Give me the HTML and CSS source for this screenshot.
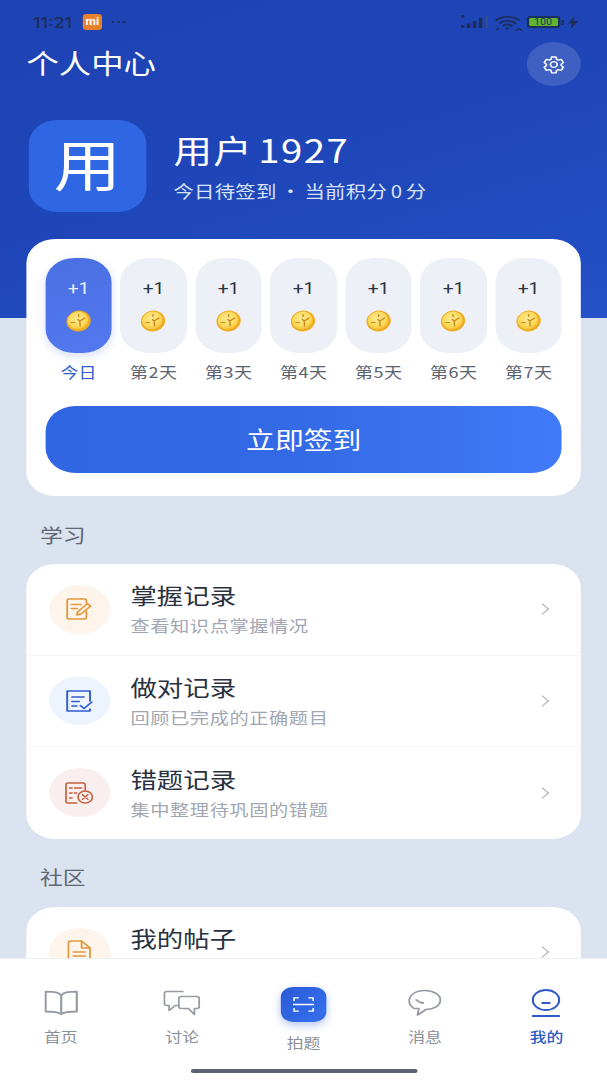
FILE: index.html
```html
<!DOCTYPE html>
<html lang="zh-CN">
<head>
<meta charset="utf-8">
<title>个人中心</title>
<link rel="stylesheet" href="styles.css">
</head>
<body>
<svg class="defs" width="0" height="0">
  <defs>
    <radialGradient id="gold" cx="42%" cy="42%" r="62%">
      <stop offset="0" stop-color="#fde992"/>
      <stop offset="0.7" stop-color="#fbd95c"/>
      <stop offset="1" stop-color="#f4bf30"/>
    </radialGradient>
    <symbol id="coin" viewBox="0 0 21 22">
      <ellipse cx="10.500" cy="11" rx="10" ry="10.600" fill="#efab22" transform="rotate(25 10.500 11)"/>
      <ellipse cx="10" cy="10.500" rx="8.400" ry="9" fill="url(#gold)" transform="rotate(25 10 10.500)"/>
      <path d="M10.500 4.500v2M15.500 8l-4 3 .3 5M4.500 12.500h3M10 9.500l1.500 1.500" fill="none" stroke="#c98a1e" stroke-width="1.200" stroke-linecap="round"/>
    </symbol>
  </defs>
</svg>
<div class="stage">
  <header class="hero">
    <div class="status">
      <div class="status-left">
        <span class="clock">11:21</span>
        <span class="mi"><span class="mi-text">mi</span></span>
        <span class="dots"><i></i><i></i><i></i></span>
      </div>
      <div class="status-right">
        <svg class="sig" width="24" height="16" viewBox="0 0 24 16"><g fill="#1d2c58"><rect x="0" y="1" width="3" height="3" rx="1"/><rect x="0" y="11" width="3" height="3"/><rect x="5" y="9.500" width="3" height="4.500"/><rect x="10" y="7" width="3" height="7"/><rect x="15" y="4" width="3" height="10"/></g><rect x="21" y="2" width="1.400" height="12" fill="#3a4f90"/></svg>
        <svg class="wifi" width="24" height="17" viewBox="0 0 24 17"><g fill="none" stroke="#1d2c58" stroke-width="1.700"><path d="M1 6.500C6.500 1.500 15.500 1.500 21 6.500"/><path d="M4 9.500C8 6 14 6 18 9.500"/><path d="M7 12c2.500-2 5.500-2 8 0"/></g><path d="M9 13.500h4l-2 2.500z" fill="#1d2c58"/><path d="M1.500 15.500h1.500v-2M19 15.500a2 2 0 1 0 3 0 2 2 0 0 0-3 0z" fill="none" stroke="#1d2c58" stroke-width="1.200"/></svg>
        <span class="batt"><span class="batt-fill">100</span></span>
        <span class="batt-tip"></span>
        <svg class="bolt" width="9" height="13" viewBox="0 0 9 13"><path d="M6 0L0 7.500h3.500L2.500 13 9 5H5z" fill="#1d2c58"/></svg>
      </div>
    </div>
    <div class="title-row">
      <h1 class="title">个人中心</h1>
      <button class="gear-btn" aria-label="设置">
        <svg width="19" height="19" viewBox="0 0 24 24" fill="none" stroke="#fff" stroke-width="1.700" stroke-linejoin="round"><path d="M9.700 2.500h4.600l.7 3 1.800 1 3-.9 2.300 4-2.300 2.100v1.600l2.300 2.100-2.300 4-3-.9-1.800 1-.7 3H9.700l-.7-3-1.800-1-3 .9-2.300-4 2.300-2.100v-1.600L1.900 9.600l2.300-4 3 .9 1.800-1z"/><circle cx="12" cy="12" r="3.600"/></svg>
      </button>
    </div>
    <div class="profile">
      <div class="avatar">用</div>
      <div class="who">
        <div class="name">用户 1927</div>
        <div class="sub">今日待签到 · 当前积分 0 分</div>
      </div>
    </div>
  </header>

  <section class="card sign">
    <div class="days">
      <div class="day today"><div class="pill"><span class="plus">+1</span><svg class="coin"><use href="#coin"/></svg></div><span class="day-label">今日</span></div>
      <div class="day"><div class="pill"><span class="plus">+1</span><svg class="coin"><use href="#coin"/></svg></div><span class="day-label">第 2 天</span></div>
      <div class="day"><div class="pill"><span class="plus">+1</span><svg class="coin"><use href="#coin"/></svg></div><span class="day-label">第 3 天</span></div>
      <div class="day"><div class="pill"><span class="plus">+1</span><svg class="coin"><use href="#coin"/></svg></div><span class="day-label">第 4 天</span></div>
      <div class="day"><div class="pill"><span class="plus">+1</span><svg class="coin"><use href="#coin"/></svg></div><span class="day-label">第 5 天</span></div>
      <div class="day"><div class="pill"><span class="plus">+1</span><svg class="coin"><use href="#coin"/></svg></div><span class="day-label">第 6 天</span></div>
      <div class="day"><div class="pill"><span class="plus">+1</span><svg class="coin"><use href="#coin"/></svg></div><span class="day-label">第 7 天</span></div>
    </div>
    <button class="sign-btn">立即签到</button>
  </section>

  <h2 class="section">学习</h2>
  <section class="card list">
    <div class="row">
      <span class="badge orange">
        <svg width="23" height="22" viewBox="0 0 23 22" fill="none" stroke="#e3983a" stroke-width="1.500" stroke-linecap="round" stroke-linejoin="round"><path d="M17 5V2.500a1.500 1.500 0 0 0-1.500-1.500H2.500A1.500 1.500 0 0 0 1 2.500v17A1.500 1.500 0 0 0 2.500 21h13a1.500 1.500 0 0 0 1.500-1.500V13"/><path d="M4.500 6.500h8M4.500 10.500h5"/><path d="M9 17l1-3.500 8-8 2.500 2.500-8 8z"/></svg>
      </span>
      <div class="text"><div class="row-title">掌握记录</div><div class="row-sub">查看知识点掌握情况</div></div>
      <span class="chev"></span>
    </div>
    <div class="row">
      <span class="badge blue">
        <svg width="23" height="22" viewBox="0 0 23 22" fill="none" stroke="#2f5ccf" stroke-width="1.600" stroke-linecap="round" stroke-linejoin="round"><path d="M20 11V1H1v20h19v-2"/><path d="M5 7h10M5 11.500h6M5 16h4"/><path d="M12 15.500l3 3 6.500-6.500"/></svg>
      </span>
      <div class="text"><div class="row-title">做对记录</div><div class="row-sub">回顾已完成的正确题目</div></div>
      <span class="chev"></span>
    </div>
    <div class="row">
      <span class="badge red">
        <svg width="24" height="22" viewBox="0 0 24 22" fill="none" stroke="#c9603f" stroke-width="1.400" stroke-linecap="round" stroke-linejoin="round"><path d="M17 8V2.500A1.500 1.500 0 0 0 15.500 1H2.500A1.500 1.500 0 0 0 1 2.500v17A1.500 1.500 0 0 0 2.500 21H10"/><path d="M4 6h2M8 6h6M4 11h2M8 11h2M4 16h2"/><circle cx="17" cy="15" r="6"/><path d="M14.800 12.800l4.400 4.400M19.200 12.800l-4.400 4.400"/></svg>
      </span>
      <div class="text"><div class="row-title">错题记录</div><div class="row-sub">集中整理待巩固的错题</div></div>
      <span class="chev"></span>
    </div>
  </section>

  <h2 class="section section-2">社区</h2>
  <section class="card list">
    <div class="row">
      <span class="badge orange">
        <svg width="20" height="24" viewBox="0 0 20 24" fill="none" stroke="#e3983a" stroke-width="1.500" stroke-linecap="round" stroke-linejoin="round"><path d="M12 1H3a2 2 0 0 0-2 2v18a2 2 0 0 0 2 2h14a2 2 0 0 0 2-2V8z"/><path d="M12 1v7h7"/><path d="M5 12h10M5 16h10"/></svg>
      </span>
      <div class="text"><div class="row-title">我的帖子</div><div class="row-sub">查看我发布的内容</div></div>
      <span class="chev"></span>
    </div>
  </section>

  <nav class="tabbar">
    <div class="tab">
      <svg class="tab-ico" width="28" height="25" viewBox="0 0 28 25" fill="none" stroke="#969ba3" stroke-width="1.800" stroke-linejoin="round"><path d="M14 5C12 2 9 1.200 1 1.200V21c6 0 10 .3 13 2.500 3-2.200 7-2.500 13-2.500V1.200C19 1.200 16 2 14 5z"/><path d="M14 5v18.500"/></svg>
      <span class="tab-label">首页</span>
    </div>
    <div class="tab">
      <svg class="tab-ico" width="31" height="25" viewBox="0 0 31 25" fill="none" stroke="#969ba3" stroke-width="1.500" stroke-linejoin="round"><path d="M17 1H3a2 2 0 0 0-2 2v10a2 2 0 0 0 2 2h2v5l5-5h3"/><path d="M15 6h13a2 2 0 0 1 2 2v8a2 2 0 0 1-2 2h-2v6l-5-6h-6a2 2 0 0 1-2-2V8a2 2 0 0 1 2-2z"/></svg>
      <span class="tab-label">讨论</span>
    </div>
    <div class="tab tab-mid">
      <span class="scan">
        <svg width="18" height="15" viewBox="0 0 20 17" fill="none" stroke="#fff" stroke-width="1.500"><path d="M1 4.500V1h4.500M14.500 1H19v3.500M1 12.500V16h4.500M14.500 16H19v-3.500M0 8.500h20"/></svg>
      </span>
      <span class="tab-label">拍题</span>
    </div>
    <div class="tab">
      <svg class="tab-ico" width="28" height="27" viewBox="0 0 28 27" fill="none" stroke="#969ba3" stroke-width="1.800" stroke-linejoin="round" stroke-linecap="round"><path d="M14 1C6.500 1 1 5.500 1 11.500c0 3 1.500 5.500 4 7.500l4 0-1 6.500 7-5.500c7 0 12-4.500 12-9.500C27 5.500 21.500 1 14 1z" stroke-width="1.600"/><path d="M7 10.500c1.500 1.600 3.500 2.600 5.500 3"/></svg>
      <span class="tab-label">消息</span>
    </div>
    <div class="tab active">
      <svg class="tab-ico" width="24" height="28" viewBox="0 0 24 28" fill="none" stroke="#2f5cc9" stroke-width="1.800" stroke-linecap="round"><ellipse cx="12" cy="11" rx="11" ry="10"/><path d="M9 14h6M1 27h22"/></svg>
      <span class="tab-label">我的</span>
    </div>
    <span class="home-bar"></span>
  </nav>
</div>
</body>
</html>
```
FILE: styles.css
```css
* { box-sizing: border-box; }
html, body { margin: 0; padding: 0; background: #dce3f0; overflow: hidden; }
body { width: 607px; height: 1080px; font-family: "Noto Sans CJK SC", "Noto Sans", sans-serif; }
.defs { position: absolute; }

/* The reference is stretched horizontally by 1.2, so the page is laid out at 506px wide. */
.stage {
  position: relative;
  width: 506px;
  height: 1080px;
  overflow: hidden;
  background: #dce3f0;
  transform: scaleX(1.2);
  transform-origin: 0 0;
}

.hero {
  height: 318px;
  background: linear-gradient(160deg, #1d42b3 0%, #1f47b9 55%, #2451c6 100%);
  color: #fff;
}
.status { height: 42px; padding: 2px 27px 0 27.500px; display: flex; justify-content: space-between; align-items: center; color: #1d2c58; }
.status-left, .status-right { display: flex; align-items: center; }
.clock { font-family: Inter, Roboto, sans-serif; font-size: 15px; font-weight: 500; color: #1d2c58; }
.mi { width: 16px; height: 16px; margin-left: 9px; border-radius: 3px; background: #e8822c; display: flex; align-items: center; justify-content: center; }
.mi-text { color: #fff; font-family: Roboto, sans-serif; font-size: 10px; font-weight: 700; line-height: 1; }
.dots { margin-left: 8px; display: flex; gap: 2.500px; }
.dots i { width: 2.200px; height: 2.500px; border-radius: 50%; background: #1d2c58; }
.status-right { margin-right: -2.500px; }
.wifi { margin-left: 3.500px; }
.batt { margin-left: 3px; width: 28px; height: 12px; border: 1.500px solid #17305f; border-radius: 3px; padding: 1px; display: flex; background: #17305f; }
.batt-fill { flex: 1; background: #62b52c; border-radius: 1px; color: #17305f; font-family: Roboto, sans-serif; font-size: 9px; line-height: 8px; text-align: center; }
.batt-tip { width: 2px; height: 5px; margin-left: 1px; background: #17305f; }
.bolt { margin-left: 3px; }

.title-row { height: 44px; padding: 0 21.700px 0 22px; display: flex; align-items: center; justify-content: space-between; }
.title { margin: -4px 0 0; font-size: 27px; line-height: 1; font-weight: 400; color: #fff; }
.gear-btn { width: 45px; height: 44px; padding: 0; border: 0; border-radius: 50%; background: rgba(255,255,255,.14); display: flex; align-items: center; justify-content: center; }

.profile { margin: 34px 0 0 24px; display: flex; align-items: center; gap: 23px; }
.avatar { width: 97.500px; height: 92px; border-radius: 24px; background: #2f66e4; color: #fff; font-size: 56px; line-height: 84px; text-align: center; }
.who { margin-top: 0; }
.name { font-size: 32px; line-height: 38px; font-weight: 400; color: #fff; margin-bottom: 11px; word-spacing: -4px; letter-spacing: 1.200px; }
.sub { font-size: 17px; line-height: 24px; color: #d7e2fb; letter-spacing: .2px; word-spacing: -1px; }

.card { margin: 0 22.500px 0 21.700px; background: #fff; border-radius: 24px; }
.sign { margin-top: -79px; height: 257px; padding: 19px 15px 0 16px; position: relative; }
.days { display: flex; gap: 7px; }
.day { width: 55.500px; flex: none; display: flex; flex-direction: column; align-items: center; }
.pill { width: 100%; height: 95px; border-radius: 24px; background: #edf1f7; display: flex; flex-direction: column; align-items: center; padding-top: 20px; }
.plus { font-family: Roboto, Inter, sans-serif; font-size: 16px; line-height: 22px; color: #2b3342; }
.coin { width: 21px; height: 22px; margin-top: 10px; }
.day-label { margin-top: 9px; font-size: 15px; line-height: 20px; color: #5a6270; white-space: nowrap; word-spacing: -3px; }
.today .pill { background: linear-gradient(165deg, #4a6fe2 0%, #5379f0 100%); box-shadow: 0 3px 8px rgba(70,110,230,.22); }
.today .plus { color: #e8eeff; }
.today .day-label { color: #2f5fc8; }
.sign-btn {
  display: block; width: 430.800px; height: 67px; margin-top: 24px; padding: 0 0 2px; border: 0; border-radius: 25px;
  background: linear-gradient(90deg, #3066e2 0%, #3369e4 45%, #3a72ee 75%, #417bfa 100%);
  color: #fff; font-family: inherit; font-size: 24px; font-weight: 400;
}

.section { margin: 24px 0 0 33.300px; height: 30px; font-size: 19px; line-height: 30px; font-weight: 400; color: #5f6673; }
.section-2 { margin-top: 23px; }
.list { margin-top: 14px; }
.section-2 + .list { margin-top: 15px; }
.row { height: 91.500px; display: flex; align-items: center; padding-left: 19px; padding-right: 26px; border-bottom: 1px solid #f2f4f7; position: relative; }
.row:last-child { border-bottom: 0; }
.badge { width: 51px; height: 49px; border-radius: 50%; flex: none; display: flex; align-items: center; justify-content: center; }
.orange { background: #fdf4ec; }
.blue { background: #eef4fe; }
.red { background: #f9efee; }
.text { margin-left: 17px; flex: 1; }
.row-title { font-size: 22px; line-height: 30px; margin-top: -2px; color: #2a3140; font-weight: 400; }
.row-sub { font-size: 16px; line-height: 24px; margin-top: 4px; letter-spacing: .5px; color: #a1a7b2; }
.chev { width: 8px; height: 8px; margin-right: 2px; border-top: 1.500px solid #aeb3bb; border-right: 1.500px solid #aeb3bb; transform: rotate(45deg); }

.tabbar { position: absolute; left: 0; right: 0; bottom: 0; height: 122px; background: #fff; border-top: 1px solid #eef0f4; display: flex; align-items: flex-start; }
.tab { flex: 1; display: flex; flex-direction: column; align-items: center; height: 100%; padding-top: 30px; }
.tab-ico { height: 28px; flex: none; }
.tab-label { margin-top: 9px; font-size: 14px; line-height: 20px; color: #8a8f99; }
.active .tab-label { color: #2f5cc4; font-weight: 500; }
.tab-mid { padding-top: 28px; }
.scan { width: 37.500px; height: 35px; border-radius: 10px; background: linear-gradient(135deg, #2a5bd8, #3670ee); box-shadow: 0 3px 8px rgba(45,90,210,.35); display: flex; align-items: center; justify-content: center; }
.tab-mid .tab-label { margin-top: 10px; }
.home-bar { position: absolute; left: 159px; bottom: 7px; width: 189px; height: 4px; border-radius: 2px; background: #5c6270; }
```
